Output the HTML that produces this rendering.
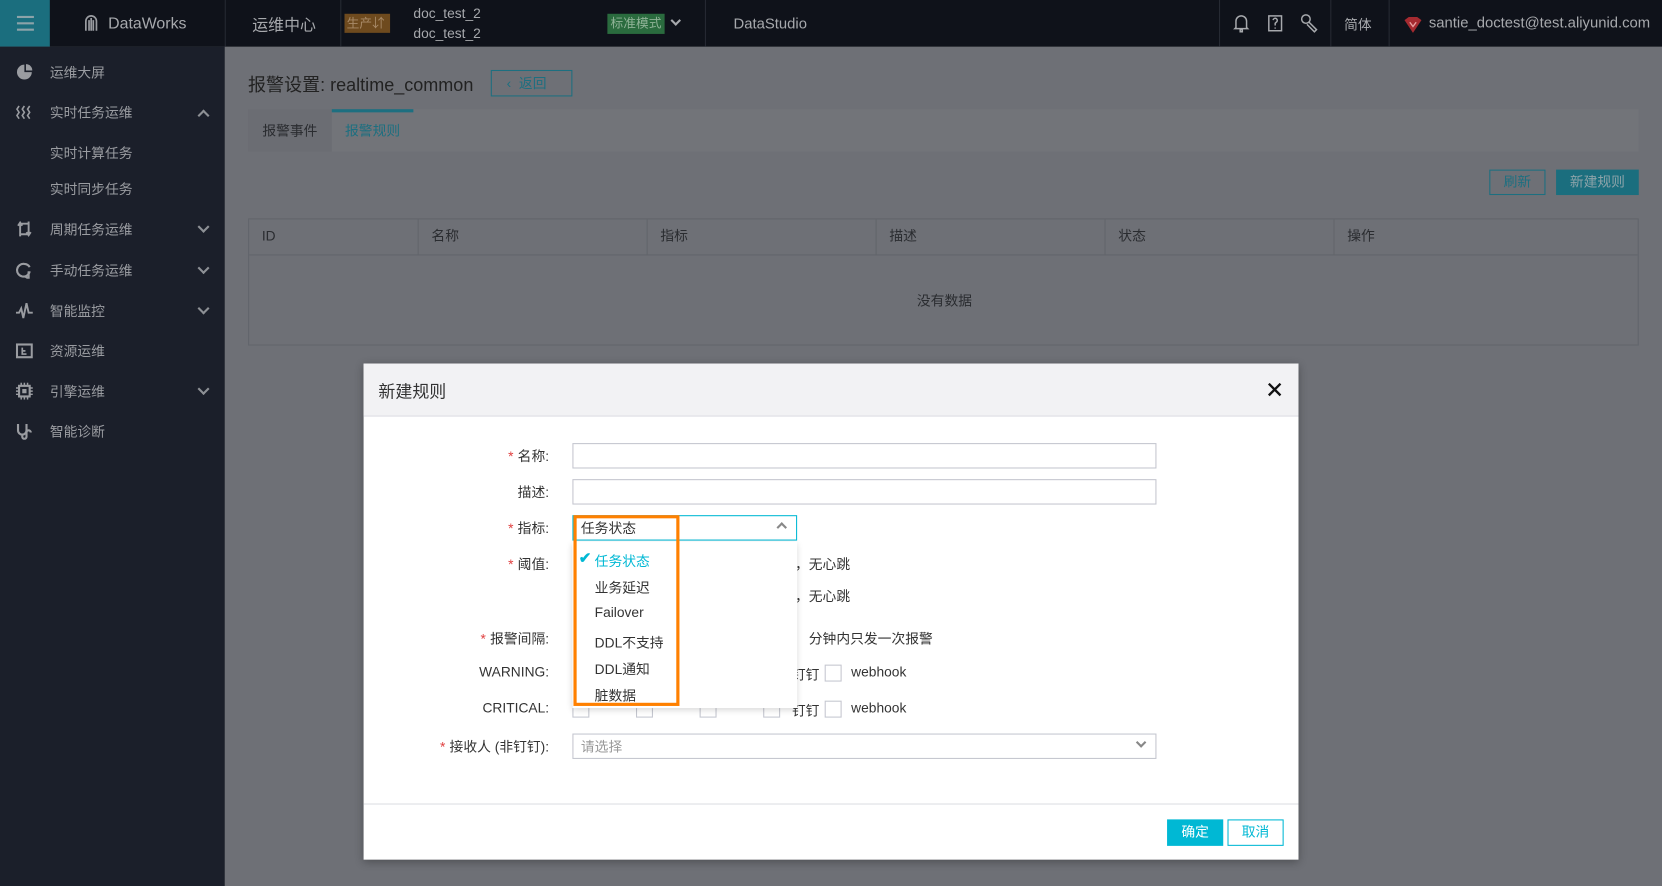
<!DOCTYPE html>
<html><head><meta charset="utf-8"><style>
*{box-sizing:border-box;margin:0;padding:0}
html,body{width:1662px;height:886px;overflow:hidden;background:#6e7076}
body{font-family:"Liberation Sans","Noto Sans CJK SC",sans-serif;font-size:13px}
#w{position:absolute;left:0;top:0;width:1568px;height:836px;transform:scale(1.06);transform-origin:0 0;background:#6e7076}
.a{position:absolute;white-space:nowrap}
#top{left:0;top:0;width:1568px;height:44px;background:#0f121a;color:#a7a9ad}
.vd{position:absolute;top:0;width:1px;height:44px;background:#262a33}
#side{left:0;top:44px;width:212px;height:792px;background:#1b1f2a;color:#9a9ca1}
.si{position:absolute;left:47px;font-size:13px;margin-top:-2px}
.ic{position:absolute;left:15px;width:16px;height:16px}
.chev{position:absolute;left:188px;width:8px;height:8px;border-right:2px solid #8d9095;border-bottom:2px solid #8d9095;transform:rotate(45deg)}
.cell{position:absolute;top:0;height:34px;line-height:32px;padding-left:12px;border-left:1px solid #62656b;color:#2a2c30}
#modal{left:343px;top:343px;width:882px;height:468px;background:#fff;box-shadow:0 2px 8px rgba(0,0,0,.3)}
.lbl{position:absolute;right:707px;color:#333;font-size:13px;margin-top:-2px}
.lbl b{color:#e04040;font-weight:normal;margin-right:4px}
.inp{position:absolute;left:197px;width:551px;height:24px;border:1px solid #c4c6cf;background:#fff}
.t{position:absolute;color:#333;font-size:13px;margin-top:-2px}
.cb{position:absolute;width:16px;height:16px;border:1px solid #c4c6cf;background:#fff}
.di{position:absolute;left:218px;color:#333;font-size:13px;margin-top:-2px}
</style></head><body><div id="w">
<div id="top" class="a">
 <div class="a" style="left:0;top:0;width:47px;height:44px;background:#1b6e7e"></div>
 <div class="a" style="left:16px;top:15px;width:16px;height:2px;background:#8ca3a9;box-shadow:0 6px 0 #8ca3a9,0 12px 0 #8ca3a9"></div>
 <svg class="a" style="left:78px;top:14px" width="16" height="16" viewBox="0 0 16 16"><path d="M3 15V6a5 5 0 0 1 10 0v9M6 15V5M10 15V5M8 3v12" stroke="#9a9ca1" stroke-width="1.6" fill="none"/></svg>
 <div class="a" style="left:102px;top:14px;font-size:15px">DataWorks</div>
 <div class="vd" style="left:212px"></div>
 <div class="a" style="left:238px;top:13px;font-size:15px">运维中心</div>
 <div class="vd" style="left:321px"></div>
 <div class="a" style="left:325px;top:13px;width:43px;height:18px;background:#6e4a1e;color:#a88a68;font-size:12px;line-height:18px;padding-left:2px">生产⇵</div>
 <div class="a" style="left:390px;top:3px;font-size:13px;line-height:19px">doc_test_2<br>doc_test_2</div>
 <div class="a" style="left:573px;top:13px;width:54px;height:19px;background:#2a6b3e;color:#8fb296;font-size:12px;line-height:19px;text-align:center">标准模式</div>
 <div class="a" style="left:634px;top:16px;width:7px;height:7px;border-right:2px solid #a7a9ad;border-bottom:2px solid #a7a9ad;transform:rotate(45deg)"></div>
 <div class="vd" style="left:665px"></div>
 <div class="a" style="left:692px;top:14px;font-size:14px">DataStudio</div>
 <div class="vd" style="left:1150px"></div>
 <svg class="a" style="left:1163px;top:13px" width="16" height="18" viewBox="0 0 16 18"><path d="M3 13V7a5 5 0 0 1 10 0v6l1 1H2zM7 15h2v2H7z" stroke="#a7a9ad" stroke-width="1.4" fill="none"/></svg>
 <svg class="a" style="left:1195px;top:13px" width="16" height="18" viewBox="0 0 16 18"><rect x="2" y="2" width="12" height="14" stroke="#a7a9ad" stroke-width="1.4" fill="none"/><path d="M6 6a2 2 0 1 1 3 2l-1 1v2M8 13v1" stroke="#a7a9ad" stroke-width="1.4" fill="none"/></svg>
 <svg class="a" style="left:1226px;top:12px" width="18" height="20" viewBox="0 0 18 20"><circle cx="6" cy="6" r="4" stroke="#a7a9ad" stroke-width="1.4" fill="none"/><path d="M9 9l7 7-2 2-7-7" stroke="#a7a9ad" stroke-width="1.4" fill="none"/></svg>
 <div class="vd" style="left:1255px"></div>
 <div class="a" style="left:1268px;top:13px;font-size:13px">简体</div>
 <div class="vd" style="left:1310px"></div>
 <svg class="a" style="left:1324px;top:14px" width="18" height="18" viewBox="0 0 18 18"><path d="M1 5l4-3h8l4 3-8 12z" fill="#a52a30"/><path d="M6 7l3 4 3-4" stroke="#e8a0a0" stroke-width="1.3" fill="none"/></svg>
 <div class="a" style="left:1348px;top:13px;font-size:14px">santie_doctest@test.aliyunid.com</div>
</div>
<div id="side" class="a">
 <svg class="ic" style="top:16px" viewBox="0 0 16 16"><path d="M8 1A7 7 0 1 0 15 8H8z" fill="#9a9ca1"/><path d="M9.5 0.5A6 6 0 0 1 15.5 6.5H9.5z" fill="#9a9ca1"/></svg>
 <div class="si" style="top:16px">运维大屏</div>
 <svg class="ic" style="top:54px" viewBox="0 0 16 16"><path d="M3 2l-2 3 2 3-2 3 2 3M8 2l-2 3 2 3-2 3 2 3M13 2l-2 3 2 3-2 3 2 3" stroke="#9a9ca1" stroke-width="1.5" fill="none"/></svg>
 <div class="si" style="top:54px">实时任务运维</div>
 <div class="chev" style="top:61px;transform:rotate(225deg)"></div>
 <div class="si" style="top:92px">实时计算任务</div>
 <div class="si" style="top:126px">实时同步任务</div>
 <svg class="ic" style="top:164px" viewBox="0 0 16 16"><path d="M4 15V3h8M12 1v12H4M2 5l2-3 2 3M10 11l2 3 2-3" stroke="#9a9ca1" stroke-width="1.8" fill="none"/></svg>
 <div class="si" style="top:164px">周期任务运维</div><div class="chev" style="top:166px"></div>
 <svg class="ic" style="top:203px" viewBox="0 0 16 16"><path d="M13 9A6 6 0 1 1 8 2a6 6 0 0 1 5 3M9 14l3 2V9" stroke="#9a9ca1" stroke-width="2" fill="none"/></svg>
 <div class="si" style="top:203px">手动任务运维</div><div class="chev" style="top:205px"></div>
 <svg class="ic" style="top:241px" viewBox="0 0 16 16"><path d="M0 10h3l2-4 2 9 3-14 2 9h4" stroke="#9a9ca1" stroke-width="1.8" fill="none"/></svg>
 <div class="si" style="top:241px">智能监控</div><div class="chev" style="top:243px"></div>
 <svg class="ic" style="top:279px" viewBox="0 0 16 16"><rect x="1" y="2" width="14" height="12" stroke="#9a9ca1" stroke-width="2" fill="none"/><path d="M6 5v6h4M6 8h3" stroke="#9a9ca1" stroke-width="1.6" fill="none"/></svg>
 <div class="si" style="top:279px">资源运维</div>
 <svg class="ic" style="top:317px" viewBox="0 0 16 16"><rect x="3" y="3" width="10" height="10" stroke="#9a9ca1" stroke-width="2" fill="none"/><rect x="6" y="6" width="4" height="4" fill="#9a9ca1"/><path d="M5 0v3M8 0v3M11 0v3M5 13v3M8 13v3M11 13v3M0 5h3M0 8h3M0 11h3M13 5h3M13 8h3M13 11h3" stroke="#9a9ca1" stroke-width="1.4"/></svg>
 <div class="si" style="top:317px">引擎运维</div><div class="chev" style="top:319px"></div>
 <svg class="ic" style="top:355px" viewBox="0 0 16 16"><path d="M2 1v6a4 4 0 0 0 8 0V1M6 11v2a2 2 0 0 0 4 0V9a2 2 0 0 1 4 0" stroke="#9a9ca1" stroke-width="2" fill="none"/></svg>
 <div class="si" style="top:355px">智能诊断</div>
</div>
<div class="a" style="left:234px;top:66px;font-size:17px;color:#222">报警设置: realtime_common</div>
<div class="a" style="left:463px;top:66px;width:77px;height:25px;border:1px solid #1d6f80;color:#1d6f80;font-size:13px;line-height:23px;padding-left:14px">‹&nbsp; 返回</div>
<div class="a" style="left:234px;top:103px;width:1312px;height:40px;background:#727479"></div>
<div class="a" style="left:234px;top:103px;width:79px;height:40px;background:#6b6d73;color:#2a2c30;line-height:42px;text-align:center">报警事件</div>
<div class="a" style="left:313px;top:103px;width:77px;height:3px;background:#1d6f80"></div>
<div class="a" style="left:313px;top:106px;width:77px;height:37px;color:#1d6f80;line-height:36px;text-align:center">报警规则</div>
<div class="a" style="left:1405px;top:160px;width:53px;height:24px;border:1px solid #1d6f80;color:#1d6f80;line-height:21px;text-align:center">刷新</div>
<div class="a" style="left:1468px;top:160px;width:78px;height:24px;background:#1b6e7e;color:#8ca3a9;line-height:23px;text-align:center">新建规则</div>
<div class="a" style="left:234px;top:206px;width:1312px;height:120px;border:1px solid #62656b">
 <div class="a" style="left:0;top:0;width:1310px;height:34px;border-bottom:1px solid #62656b">
  <div class="cell" style="left:0;border:0">ID</div><div class="cell" style="left:159px">名称</div><div class="cell" style="left:375px">指标</div><div class="cell" style="left:591px">描述</div><div class="cell" style="left:807px">状态</div><div class="cell" style="left:1023px">操作</div>
 </div>
 <div class="a" style="left:630px;top:66px;color:#2a2c30">没有数据</div>
</div>
<div id="modal" class="a">
 <div class="a" style="left:0;top:0;width:882px;height:50px;background:#f2f2f4;border-bottom:1px solid #dcdde3"></div>
 <div class="a" style="left:14px;top:13px;font-size:16px;color:#333">新建规则</div>
 <svg class="a" style="left:853px;top:18px" width="13" height="13" viewBox="0 0 13 13"><path d="M1 1l11 11M12 1L1 12" stroke="#111" stroke-width="2.2"/></svg>
 <div class="lbl" style="top:79px"><b>*</b>名称:</div><div class="inp" style="top:75px"></div>
 <div class="lbl" style="top:113px">描述:</div><div class="inp" style="top:109px"></div>
 <div class="lbl" style="top:147px"><b>*</b>指标:</div>
 <div class="inp" style="top:143px;width:212px;border-color:#00b8d4"></div>
 <div class="t" style="left:205px;top:147px">任务状态</div>
 <div class="a" style="left:391px;top:151px;width:7px;height:7px;border-left:2px solid #888;border-top:2px solid #888;transform:rotate(45deg)"></div>
 <div class="lbl" style="top:181px"><b>*</b>阈值:</div>
 <div class="t" style="left:407px;top:181px">，无心跳</div>
 <div class="t" style="left:407px;top:211px">，无心跳</div>
 <div class="lbl" style="top:251px"><b>*</b>报警间隔:</div>
 <div class="t" style="left:420px;top:251px">分钟内只发一次报警</div>
 <div class="lbl" style="top:285px">WARNING:</div>
 <div class="t" style="left:404px;top:285px">钉钉</div><div class="cb" style="left:435px;top:284px"></div><div class="t" style="left:460px;top:285px">webhook</div>
 <div class="lbl" style="top:319px">CRITICAL:</div>
 <div class="cb" style="left:197px;top:318px"></div><div class="cb" style="left:257px;top:318px"></div><div class="cb" style="left:317px;top:318px"></div><div class="cb" style="left:377px;top:318px"></div>
 <div class="t" style="left:404px;top:319px">钉钉</div><div class="cb" style="left:435px;top:318px"></div><div class="t" style="left:460px;top:319px">webhook</div>
 <div class="lbl" style="top:353px"><b>*</b>接收人 (非钉钉):</div>
 <div class="inp" style="top:349px"></div><div class="t" style="left:205px;top:353px;color:#999">请选择</div>
 <div class="a" style="left:730px;top:354px;width:7px;height:7px;border-right:2px solid #888;border-bottom:2px solid #888;transform:rotate(45deg)"></div>
 <div class="a" style="left:197px;top:168px;width:212px;height:157px;background:#fff;box-shadow:0 2px 6px rgba(0,0,0,.18)"></div>
 <div class="a" style="left:203px;top:175px;color:#00b8d4;font-size:14px;font-weight:bold">✔</div>
 <div class="di" style="top:178px;color:#00b8d4">任务状态</div>
 <div class="di" style="top:203px">业务延迟</div>
 <div class="di" style="top:229px">Failover</div>
 <div class="di" style="top:255px">DDL不支持</div>
 <div class="di" style="top:280px">DDL通知</div>
 <div class="di" style="top:305px">脏数据</div>
 <div class="a" style="left:198px;top:143px;width:100px;height:180px;border:3px solid #ff8000"></div>
 <div class="a" style="left:0;top:415px;width:882px;height:1px;background:#dcdde3"></div>
 <div class="a" style="left:758px;top:430px;width:53px;height:25px;background:#00b8d4;color:#fff;line-height:24px;text-align:center">确定</div>
 <div class="a" style="left:815px;top:430px;width:53px;height:25px;border:1px solid #00b8d4;color:#00b8d4;line-height:22px;text-align:center">取消</div>
</div>
</div></body></html>
